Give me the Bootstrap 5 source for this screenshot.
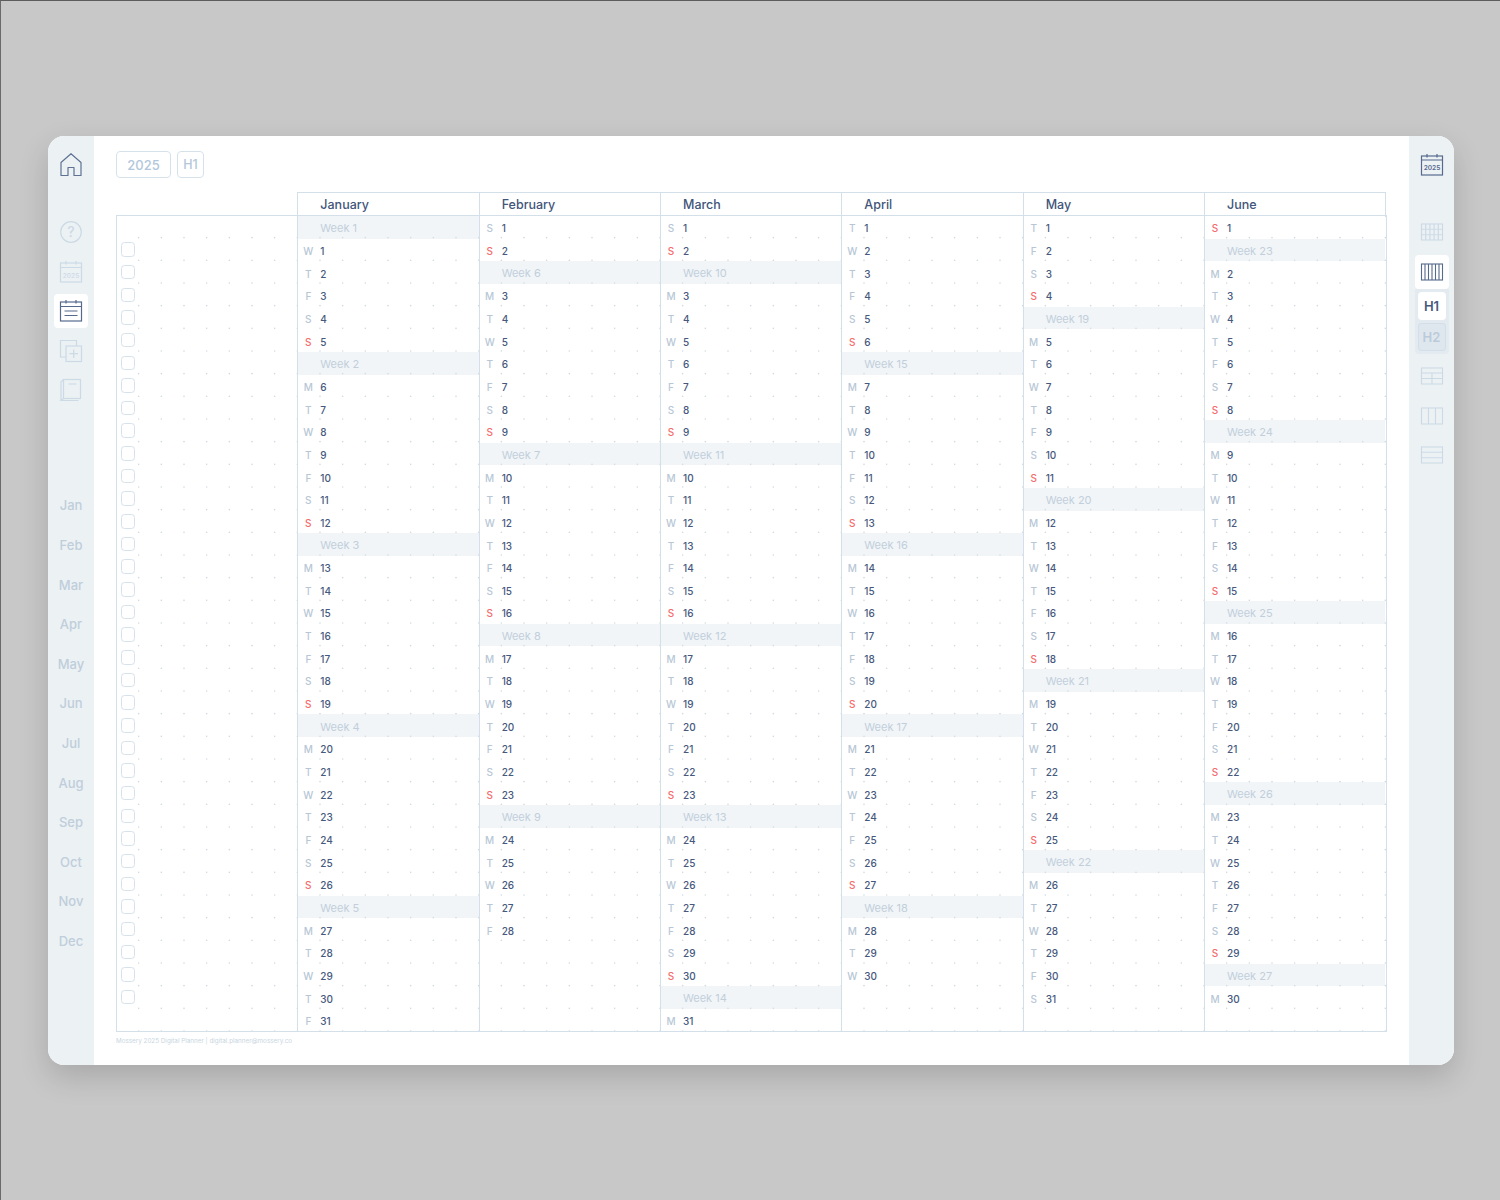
<!doctype html>
<html lang="en">
<head>
<meta charset="utf-8">
<title>Mossery 2025 Digital Planner</title>
<link href="https://cdn.jsdelivr.net/npm/bootstrap@5.3.0/dist/css/bootstrap.min.css" rel="stylesheet">
<style>
html,body{height:100%}
body{background:#c8c8c8;font-family:Inter,"Liberation Sans",sans-serif;border-top:1px solid #5c5c5c;border-left:1px solid #6a6a6a;padding:135px 0 0 47px}
.sheet{width:1406px;height:929px;background:#fff;border-radius:16px;overflow:hidden;box-shadow:0 12px 30px rgba(0,0,0,.16)}
.rail{width:46px;background:#ecf1f4;padding-top:12px;flex:none}
.rail-r{width:45px;padding-top:12px}
.slot{width:34px;height:34px;margin-bottom:5.6px;border-radius:4px}
.slot.on{background:#fff}
.slot-gap{margin-bottom:33px}
.months{margin-top:73.4px;color:#bfcedb;font-size:13px;font-weight:500}
.months div{height:39.6px;line-height:39.6px;text-align:center}
.subgroup{background:#e3eaf0;width:34px;height:65px;margin-bottom:5.6px;border-radius:0 0 4px 4px;padding:3px 3px 0}
.subtab{width:28px;height:28px;border-radius:4px;font-size:13px;font-weight:600;line-height:28px;text-align:center;margin-bottom:3px}
.subtab.cur{background:#fff;color:#45597d}
.subtab.off{background:#dfe7ee;color:#bccbda;box-shadow:inset 0 0 0 1px #d3dee8}
.paper{padding:15px 0 0 22px;flex:1}
.chip{height:27px;border:1.3px solid #d6e2eb;border-radius:4px;color:#b2c7db;font-size:13px;font-weight:500;line-height:26px;text-align:center}
.chip-y{width:55px}
.chip-h{width:27px;margin-left:6px;font-size:12.5px}
.heads{margin-top:14px;height:23px;display:grid;grid-template-columns:repeat(7,181.33px)}
.mon{border:1px solid #d3dfe9;border-width:1px 0 0 1px;padding-left:22px;color:#42557a;font-size:12.5px;font-weight:500;line-height:24px}
.mon:last-child{border-right:1px solid #d3dfe9;width:182px}
.board{display:grid;grid-template-columns:repeat(7,181.33px);width:1271px;height:817px;border:1px solid #d3dfe9;border-left:0;background-origin:border-box;background-image:url("data:image/svg+xml,%3Csvg xmlns='http://www.w3.org/2000/svg' width='68' height='68'%3E%3Cg fill='%23cfdae2'%3E%3Ccircle cx='0' cy='0' r='.8'/%3E%3Ccircle cx='22.67' cy='0' r='.8'/%3E%3Ccircle cx='45.33' cy='0' r='.8'/%3E%3Ccircle cx='68' cy='0' r='.8'/%3E%3Ccircle cx='0' cy='22.67' r='.8'/%3E%3Ccircle cx='22.67' cy='22.67' r='.8'/%3E%3Ccircle cx='45.33' cy='22.67' r='.8'/%3E%3Ccircle cx='68' cy='22.67' r='.8'/%3E%3Ccircle cx='0' cy='45.33' r='.8'/%3E%3Ccircle cx='22.67' cy='45.33' r='.8'/%3E%3Ccircle cx='45.33' cy='45.33' r='.8'/%3E%3Ccircle cx='68' cy='45.33' r='.8'/%3E%3Ccircle cx='0' cy='68' r='.8'/%3E%3Ccircle cx='22.67' cy='68' r='.8'/%3E%3Ccircle cx='45.33' cy='68' r='.8'/%3E%3Ccircle cx='68' cy='68' r='.8'/%3E%3C/g%3E%3C/svg%3E");background-size:68px 68px}
.lane{border-left:1px solid #d3dfe9;min-width:0}
.line{height:22.67px;display:flex;align-items:center}
.tick{width:14.5px;height:14.5px;border:1.3px solid #d6e2eb;border-radius:3.5px;margin-left:3.5px;margin-bottom:1px;background:#fff}
.dow{width:20px;margin-right:2px;text-align:center;font-size:10px;font-weight:500;color:#b7c7d6;padding-top:3px}
.dow.sun{color:#f56c6c}
.num{font-size:10px;font-weight:500;color:#46597d;padding-top:3px}
.wk{background:rgba(218,228,235,.38);padding-left:22px;font-size:11px;color:#c1cfdc;padding-top:2px}
.foot{font-size:6.3px;color:#c9d6e1;margin-top:5px;line-height:8px}
svg{display:block}
</style>
</head>
<body>
<div class="sheet d-flex">
  <aside class="rail d-flex flex-column align-items-center">
    <div class="slot slot-gap d-flex align-items-center justify-content-center">
      <svg width="24" height="24" viewBox="0 0 24 24" fill="none" stroke="#5f7294" stroke-width="1.2" stroke-linejoin="round"><path d="M2 9.500 12 .7l10 8.800V22.500h-7V14.500H9v8H2z"/></svg>
    </div>
    <div class="slot d-flex align-items-center justify-content-center">
      <svg width="24" height="24" viewBox="0 0 24 24" fill="none"><circle cx="12" cy="12" r="10.3" stroke="#ccdae6" stroke-width="1.2"/><text x="12" y="16.8" text-anchor="middle" font-family="Inter" font-size="14" font-weight="500" fill="#ccdae6">?</text></svg>
    </div>
    <div class="slot d-flex align-items-center justify-content-center">
      <svg width="24" height="24" viewBox="0 0 24 24" fill="none" stroke="#ccdae6" stroke-width="1.2"><rect x="1.500" y="3" width="21" height="19"/><path d="M1.500 7.500h21M7 1v3.500M17 1v3.500"/><text x="12" y="17.600" text-anchor="middle" font-family="Inter" font-size="6.600" font-weight="500" fill="#ccdae6" stroke="none">2025</text></svg>
    </div>
    <div class="slot on d-flex align-items-center justify-content-center">
      <svg width="24" height="24" viewBox="0 0 24 24" fill="none" stroke="#566a8e" stroke-width="1.2"><rect x="1.500" y="3" width="21" height="19"/><path d="M1.500 7.500h21M7 1v3.500M17 1v3.500M5.500 12h13M5.500 16.500h13"/></svg>
    </div>
    <div class="slot d-flex align-items-center justify-content-center">
      <svg width="24" height="24" viewBox="0 0 24 24" fill="none" stroke="#ccdae6" stroke-width="1.2"><path d="M7 18H1.500V1.500h16V7"/><rect x="7" y="7" width="15.500" height="15.500"/><path d="M14.700 10.500v8.500M10.500 14.700h8.500"/></svg>
    </div>
    <div class="slot d-flex align-items-center justify-content-center">
      <svg width="24" height="24" viewBox="0 0 24 24" fill="none" stroke="#ccdae6" stroke-width="1.2"><rect x="4.500" y="1.500" width="17" height="19"/><path d="M4.500 20.500 2 22.500h17.500M2 22.500V4l2.500-2.500M9.500 6h8"/></svg>
    </div>
    <nav class="months w-100">
      <div>Jan</div><div>Feb</div><div>Mar</div><div>Apr</div><div>May</div><div>Jun</div><div>Jul</div><div>Aug</div><div>Sep</div><div>Oct</div><div>Nov</div><div>Dec</div>
    </nav>
  </aside>

  <main class="paper">
    <div class="d-flex">
      <div class="chip chip-y">2025</div>
      <div class="chip chip-h">H1</div>
    </div>
    <div class="heads" id="heads"></div>
    <div class="board" id="board"></div>
    <div class="foot">Mossery 2025 Digital Planner | digital.planner@mossery.co</div>
  </main>

  <aside class="rail rail-r d-flex flex-column align-items-center">
    <div class="slot slot-gap d-flex align-items-center justify-content-center">
      <svg width="24" height="24" viewBox="0 0 24 24" fill="none" stroke="#566a8e" stroke-width="1.2"><rect x="1.500" y="3" width="21" height="19"/><path d="M1.500 7h21M7 1v3.500M17 1v3.500"/><text x="12" y="17.400" text-anchor="middle" font-family="Inter" font-size="6.600" font-weight="600" fill="#566a8e" stroke="none">2025</text></svg>
    </div>
    <div class="slot d-flex align-items-center justify-content-center">
      <svg width="24" height="18" viewBox="0 0 24 18" fill="none" stroke="#ccdae6" stroke-width="1.1"><rect x="1.500" y="1" width="21" height="16"/><path d="M5.700 1v16M9.900 1v16M14.100 1v16M18.300 1v16M1.500 6.300h21M1.500 11.700h21"/></svg>
    </div>
    <div class="slot on mb-0 d-flex align-items-center justify-content-center">
      <svg width="24" height="18" viewBox="0 0 24 18" fill="none" stroke="#566a8e" stroke-width="1.1"><rect x="1.500" y="1" width="21" height="16"/><path d="M5 1v16M8.500 1v16M12 1v16M15.500 1v16M19 1v16"/></svg>
    </div>
    <div class="subgroup">
      <div class="subtab cur">H1</div>
      <div class="subtab off mb-0">H2</div>
    </div>
    <div class="slot d-flex align-items-center justify-content-center">
      <svg width="24" height="18" viewBox="0 0 24 18" fill="none" stroke="#ccdae6" stroke-width="1.1"><rect x="1.500" y="1" width="21" height="16"/><path d="M1.500 6h21M1.500 11.500h21M12 6v11"/></svg>
    </div>
    <div class="slot d-flex align-items-center justify-content-center">
      <svg width="24" height="18" viewBox="0 0 24 18" fill="none" stroke="#ccdae6" stroke-width="1.1"><rect x="1.500" y="1" width="21" height="16"/><path d="M8.500 1v16M15.500 1v16"/></svg>
    </div>
    <div class="slot d-flex align-items-center justify-content-center">
      <svg width="24" height="18" viewBox="0 0 24 18" fill="none" stroke="#ccdae6" stroke-width="1.1"><rect x="1.500" y="1" width="21" height="16"/><path d="M1.500 6.300h21M1.500 11.700h21"/></svg>
    </div>
  </aside>
</div>
<script>
var names=['January','February','March','April','May','June'];
var lens=[31,28,31,30,31,30];
var letters=['S','M','T','W','T','F','S'];
var heads=document.getElementById('heads'),board=document.getElementById('board');
function el(cls,txt){var d=document.createElement('div');d.className=cls;if(txt!==undefined)d.textContent=txt;return d;}
heads.appendChild(el('spacer'));
var left=el('lane');
left.appendChild(el('line'));
for(var i=0;i<34;i++){var r=el('line');r.appendChild(el('tick'));left.appendChild(r);}
board.appendChild(left);
var doy=0;
names.forEach(function(n,m){
  heads.appendChild(el('mon',n));
  var lane=el('lane');
  for(var d=1;d<=lens[m];d++){
    doy++;
    var wd=(doy+2)%7;
    if(doy===1)lane.appendChild(el('line wk','Week 1'));
    if(wd===1)lane.appendChild(el('line wk','Week '+(Math.floor((doy-6)/7)+2)));
    var r=el('line');
    r.appendChild(el('dow'+(wd===0?' sun':''),letters[wd]));
    r.appendChild(el('num',d));
    lane.appendChild(r);
  }
  board.appendChild(lane);
});
</script>
<script src="https://cdn.jsdelivr.net/npm/bootstrap@5.3.0/dist/js/bootstrap.bundle.min.js"></script>
</body>
</html>
